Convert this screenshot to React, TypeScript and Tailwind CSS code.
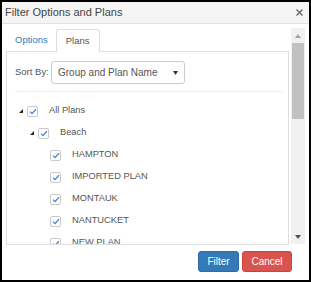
import React from "react";

interface PlanNode {
  label: string;
  level: number;
  expandable: boolean;
}

const nodes: PlanNode[] = [
  { label: "All Plans", level: 0, expandable: true },
  { label: "Beach", level: 1, expandable: true },
  { label: "HAMPTON", level: 2, expandable: false },
  { label: "IMPORTED PLAN", level: 2, expandable: false },
  { label: "MONTAUK", level: 2, expandable: false },
  { label: "NANTUCKET", level: 2, expandable: false },
  { label: "NEW PLAN", level: 2, expandable: false },
];

const indent = ["pl-0", "pl-[11px]", "pl-[23px]"];

const CheckBox = () => (
  <span className="w-[11px] h-[11px] border border-[#c9c9c9] rounded-[2px] bg-white flex items-center justify-center shrink-0">
    <svg width="8" height="7" viewBox="0 0 8 7">
      <path d="M1 3.6 L3 5.6 L7 1.2" fill="none" stroke="#3b86d6" strokeWidth="1.3" />
    </svg>
  </span>
);

const Toggle = () => (
  <svg width="4" height="4" viewBox="0 0 4 4">
    <polygon points="4,0 4,4 0,4" fill="#222" />
  </svg>
);

const App = () => {
  return (
    <div className="w-[311px] h-[282px] border-2 border-black bg-white flex flex-col text-[#333] font-['Liberation_Sans',Arial,sans-serif]">
      {/* Title bar */}
      <div className="h-[22px] shrink-0 bg-[#f5f5f5] border-b border-[#e2e2e2] flex items-center justify-between pl-[3px] pr-[6px]">
        <span className="text-[11px] leading-none text-[#444]">Filter Options and Plans</span>
        <svg width="7" height="7" viewBox="0 0 7 7">
          <path d="M0.5 0.5 L6.5 6.5 M6.5 0.5 L0.5 6.5" stroke="#666" strokeWidth="1.3" />
        </svg>
      </div>

      {/* Body */}
      <div className="flex h-[221px] pt-[4px] shrink-0">
        <div className="ml-[4px] mt-[1px] w-[283px] flex flex-col">
          {/* Tabs */}
          <div className="h-[23px] shrink-0 flex items-end border-b border-[#ddd] text-[9.5px]">
            <span className="h-[22px] pl-[9px] pr-[8px] flex items-center text-[#337ab7]">Options</span>
            <span className="h-[23px] -mb-px px-[9px] flex items-center bg-white border border-b-0 border-[#ddd] rounded-t-[3px] text-[#555]">
              Plans
            </span>
          </div>

          {/* Panel */}
          <div className="flex-1 border-x border-b border-[#ddd] overflow-hidden pt-[9px]">
            <div className="flex items-center pl-[8px]">
              <span className="w-[36px] text-[9.5px] text-[#555]">Sort By:</span>
              <div className="w-[134px] h-[23px] border border-[#ccc] rounded-[3px] flex items-center justify-between pl-[6px] pr-[6px]">
                <span className="text-[10px] text-[#555]">Group and Plan Name</span>
                <svg width="5" height="4" viewBox="0 0 5 4">
                  <polygon points="0,0 5,0 2.5,4" fill="#333" />
                </svg>
              </div>
            </div>
            <div className="h-px bg-[#eee] ml-[8px] mr-[5px] mt-[7px]" />
            <div className="mt-[8px] pl-[12px]">
              {nodes.map((n) => (
                <div key={n.label} className={`h-[22px] flex items-center ${indent[n.level]}`}>
                  <span className="w-[4px] h-[4px] flex shrink-0">{n.expandable && <Toggle />}</span>
                  <span className="ml-[4px]">
                    <CheckBox />
                  </span>
                  <span className="ml-[11px] text-[9.3px] text-[#555]">{n.label}</span>
                </div>
              ))}
            </div>
          </div>
        </div>

        {/* Scrollbar */}
        <div className="ml-[2px] w-[14px] h-[216px] bg-[#f1f1f1] flex flex-col items-center">
          <div className="h-[15px] flex items-center">
            <svg width="6" height="4" viewBox="0 0 6 4">
              <polygon points="0,4 6,4 3,0" fill="#a3a3a3" />
            </svg>
          </div>
          <div className="w-[12px] h-[76px] bg-[#c1c1c1]" />
          <div className="flex-1" />
          <div className="h-[15px] flex items-center">
            <svg width="6" height="4" viewBox="0 0 6 4">
              <polygon points="0,0 6,0 3,4" fill="#505050" />
            </svg>
          </div>
        </div>
      </div>

      {/* Footer buttons */}
      <div className="flex justify-end gap-[3px] pt-[6px] pr-[17px]">
        <button className="w-[41px] h-[21px] rounded-[3px] bg-[#337ab7] border border-[#2e6da4] text-white text-[10px]">
          Filter
        </button>
        <button className="w-[50px] h-[21px] rounded-[3px] bg-[#d9534f] border border-[#d43f3a] text-white text-[10px]">
          Cancel
        </button>
      </div>
    </div>
  );
};

export default App;
